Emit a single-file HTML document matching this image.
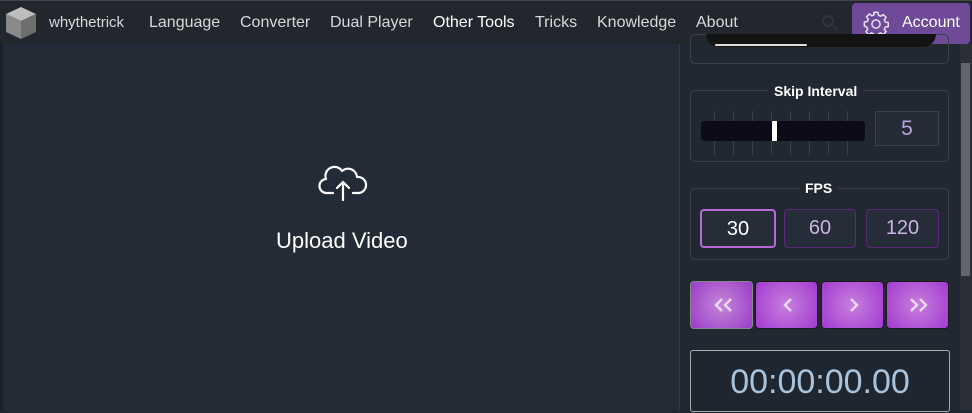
<!DOCTYPE html>
<html><head><style>
*{box-sizing:border-box;margin:0;padding:0}
body{width:972px;height:410px;overflow:hidden;background:#222831;font-family:"Liberation Sans",sans-serif;position:relative}
.nav{position:absolute;left:0;top:0;width:972px;height:44px;background:#22272e;border-top:1px solid #444}
.nav span{position:absolute;top:13px;font-size:16px;color:#d8d8d8}
.main{position:absolute;left:0;top:44px;width:680px;height:366px;background:#232b36;border-left:3px solid #1b2028;border-right:1px solid #333b46}
.right{position:absolute;left:680px;top:44px;width:280px;height:366px;background:#222831}
.sb{position:absolute;left:960px;top:44px;width:12px;height:366px;background:#2a2f36}
.box{position:absolute;border:1px solid #3a414b;border-radius:5px}
.leg{position:absolute;background:#222831;color:#fff;font-weight:bold;font-size:14px;padding:0 6px}
.fps{position:absolute;top:209px;height:39px;border:1px solid #5a2a78;border-radius:4px;background:#262d38;color:#c9b3e0;font-family:"Liberation Sans",sans-serif;font-size:20px;text-align:center;line-height:37px}
.btn{position:absolute;top:281px;width:63px;height:48px;border-radius:4px;background:radial-gradient(circle,#c77fdd,#a23ad0);border:1px solid #1a1a1a}
.btn svg{position:absolute;left:21px;top:14px}
</style></head><body>
<div class="nav">
<svg style="position:absolute;left:4px;top:4px" width="34" height="36" viewBox="0 0 34 36"><polygon points="17,2 32,9 17,16 2,9" fill="#bdbdbd"/><polygon points="2,9 17,16 17,34 2,27" fill="#8a8a8a"/><polygon points="32,9 17,16 17,34 32,27" fill="#6e6e6e"/></svg>
<span style="left:49px;font-size:15px">whythetrick</span>
<span style="left:149px">Language</span>
<span style="left:240px">Converter</span>
<span style="left:330px">Dual Player</span>
<span style="left:433px;color:#fff">Other Tools</span>
<span style="left:535px">Tricks</span>
<span style="left:597px">Knowledge</span>
<span style="left:696px">About</span>
<svg style="position:absolute;left:822px;top:14px" width="16" height="16"><circle cx="6" cy="6" r="5" fill="none" stroke="#333" stroke-width="2"/><line x1="10" y1="10" x2="15" y2="15" stroke="#333" stroke-width="2"/></svg>
<div style="position:absolute;left:852px;top:2px;width:118px;height:41px;background:#6f4a98;border-radius:4px">
<svg style="position:absolute;left:9px;top:7px" width="30" height="28" viewBox="0 0 24 24" fill="none" stroke="#e6e0ee" stroke-width="1.3"><circle cx="12" cy="12" r="3.5"/><path d="M10.3 2h3.4l.5 2.6 1.8.8 2.2-1.5 2.4 2.4-1.5 2.2.8 1.8 2.6.5v3.4l-2.6.5-.8 1.8 1.5 2.2-2.4 2.4-2.2-1.5-1.8.8-.5 2.6h-3.4l-.5-2.6-1.8-.8-2.2 1.5-2.4-2.4 1.5-2.2-.8-1.8L2 13.7v-3.4l2.6-.5.8-1.8-1.5-2.2 2.4-2.4 2.2 1.5 1.8-.8z"/></svg>
<span style="position:absolute;left:50px;top:11px;color:#fff;font-size:16px">Account</span></div>
</div>
<div class="main">
<svg style="position:absolute;left:314px;top:118px" width="52" height="42" viewBox="0 0 52 42" fill="none" stroke="#fff" stroke-width="2.2" stroke-linecap="round" stroke-linejoin="round"><path d="M16 31H10a7 7 0 0 1-1-14 9 9 0 0 1 16-8 9 9 0 0 1 15 6 7.5 7.5 0 0 1 2 16h-6"/><path d="M26 38V20M20 26l6-6 6 6"/></svg>
<div style="position:absolute;left:273px;top:184px;color:#fff;font-size:22px">Upload Video</div>
</div>
<div class="right">
<div class="box" style="left:10px;top:-10px;width:259px;height:30px"></div>
<div style="position:absolute;left:26px;top:-10px;width:230px;height:13px;background:#131313;border-radius:0 0 14px 14px"></div>
<div style="position:absolute;left:35px;top:0;width:92px;height:2px;background:#ddd;border-radius:2px"></div>
<div class="box" style="left:10px;top:46px;width:259px;height:72px"></div>
<div class="leg" style="left:88px;top:39px">Skip Interval</div>
<div style="position:absolute;left:21px;top:67px;width:164px;height:44px;background:repeating-linear-gradient(90deg,transparent 0 13px,#3a414b 13px 14px,transparent 14px 19px)"></div>
<div style="position:absolute;left:21px;top:77px;width:164px;height:20px;background:#0e0b19;border-radius:3px"></div>
<div style="position:absolute;left:92px;top:77px;width:5px;height:20px;background:#fff"></div>
<div style="position:absolute;left:195px;top:67px;width:64px;height:35px;border:1px solid #3a414b;background:#252c37;color:#b5a5dc;font-size:21px;text-align:center;line-height:33px">5</div>
<div class="box" style="left:10px;top:144px;width:259px;height:72px"></div>
<div class="leg" style="left:119px;top:136px">FPS</div>
</div>
<div class="fps" style="left:700px;border:2px solid #b96ad9;width:76px;color:#fff">30</div>
<div class="fps" style="left:784px;width:72px">60</div>
<div class="fps" style="left:866px;width:73px">120</div>
<div class="btn" style="left:690px;border-color:#888;background:radial-gradient(circle,#c288d6,#9b3bc8)"><svg width="22" height="18" fill="none" stroke="#ecd6f6" stroke-width="2.4"><path d="M10 3L4 9l6 6M19 3l-6 6 6 6"/></svg></div>
<div class="btn" style="left:755px"><svg width="22" height="18" fill="none" stroke="#ecd6f6" stroke-width="2.4"><path d="M14 3L8 9l6 6"/></svg></div>
<div class="btn" style="left:821px"><svg width="22" height="18" fill="none" stroke="#ecd6f6" stroke-width="2.4"><path d="M8 3l6 6-6 6"/></svg></div>
<div class="btn" style="left:886px"><svg width="22" height="18" fill="none" stroke="#ecd6f6" stroke-width="2.4"><path d="M3 3l6 6-6 6M12 3l6 6-6 6"/></svg></div>
<div style="position:absolute;left:690px;top:350px;width:260px;height:62px;border:1px solid #aaa;border-radius:3px;background:#202630;color:#a9c3dc;font-family:'Liberation Sans',sans-serif;font-size:34px;text-align:center;line-height:62px">00:00:00.00</div>
<div class="sb"><div style="position:absolute;left:1px;top:19px;width:9px;height:213px;background:#61666d"></div></div>
</body></html>
